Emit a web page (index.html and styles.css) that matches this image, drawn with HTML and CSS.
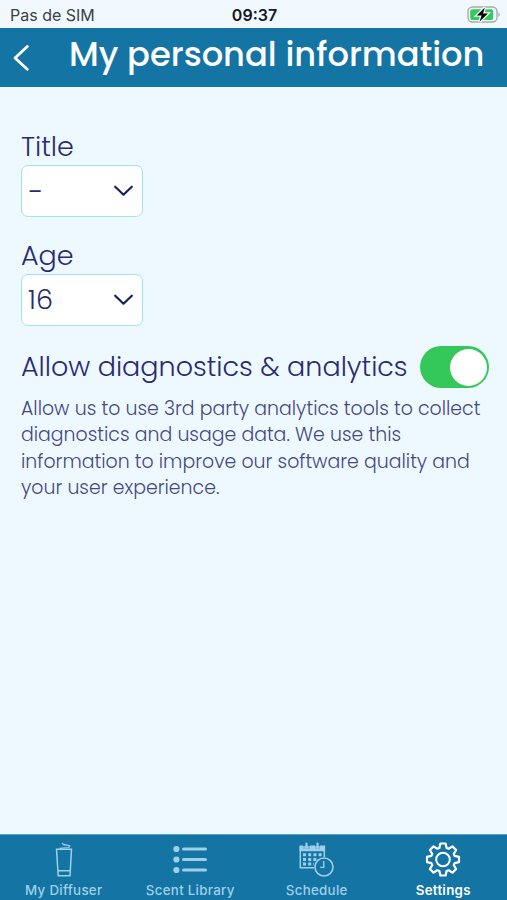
FILE: index.html
```html
<!DOCTYPE html>
<html lang="en">
<head>
<meta charset="utf-8">
<title>My personal information</title>
<link rel="stylesheet" href="styles.css">
</head>
<body>
<div class="status">
  <span class="carrier">Pas de SIM</span>
  <span class="time">09:37</span>
  <svg class="battery" width="33" height="18" viewBox="0 0 33 18">
    <rect x="1" y="1" width="29" height="15" rx="4.500" fill="#f4faff" stroke="#a5abb0" stroke-width="1.400"/>
    <rect x="3.200" y="3.200" width="23" height="10.800" rx="2" fill="#35ca5b"/>
    <path d="M31.400 6.200c1.800.9 1.800 3.800 0 4.700z" fill="#a5abb0"/>
    <path d="M17.800 1.500 9.800 9.400h4.800L12.500 15.700l8.400-8.200h-4.900z" fill="#000" stroke="#f4faff" stroke-width="2.600" paint-order="stroke"/>
  </svg>
</div>
<header class="header">
  <svg class="back" width="20" height="30" viewBox="0 0 20 30"><path d="M16.300 4.500 4 16 16.300 27.200" fill="none" stroke="#fff" stroke-width="2.800" stroke-linecap="round" stroke-linejoin="round"/></svg>
  <h1>My personal information</h1>
</header>
<main class="content">
  <section class="field">
    <span class="label">Title</span>
    <div class="select"><span class="dash">–</span><svg width="20" height="12" viewBox="0 0 20 12"><path d="M1.200 1.700 9.500 9.700l8.300-8" /></svg></div>
  </section>
  <section class="field">
    <span class="label">Age</span>
    <div class="select"><span>16</span><svg width="20" height="12" viewBox="0 0 20 12"><path d="M1.200 1.700 9.500 9.700l8.300-8" /></svg></div>
  </section>
  <div class="consent">
    <span class="label">Allow diagnostics &amp; analytics</span>
    <span class="toggle"><span class="knob"></span></span>
  </div>
  <p class="note">
    <span class="line">Allow us to use 3rd party analytics tools to collect</span>
    <span class="line">diagnostics and usage data. We use this</span>
    <span class="line">information to improve our software quality and</span>
    <span class="line">your user experience.</span>
  </p>
</main>
<nav class="tabs">
  <a class="tab">
    <svg width="36" height="36" viewBox="0 0 36 36" fill="none" stroke="currentColor" stroke-width="1.500">
      <path d="M10.500 7.200h15L24 33.700H12.200zM11.700 28.700h12.600"/>
      <path d="M13.500 6.300l9.300-.8 1-1.700-7-1.600M16 1.200l2.500 2" stroke-width="1.200"/>
    </svg>
    <span>My Diffuser</span>
  </a>
  <a class="tab">
    <svg width="36" height="36" viewBox="0 0 36 36" fill="currentColor">
      <circle cx="4.400" cy="7" r="3.100"/><circle cx="4.400" cy="17.500" r="3.100"/><circle cx="4.400" cy="28" r="3.100"/>
      <path d="M11.500 7h22M11.500 17.500h22M11.500 28h22" stroke="currentColor" stroke-width="3" stroke-linecap="round"/>
    </svg>
    <span>Scent Library</span>
  </a>
  <a class="tab">
    <svg width="36" height="36" viewBox="1 0 36 36" fill="none" stroke="currentColor">
      <path d="M16 25.700H2.300V5h24v10" stroke-width="1.500"/>
      <path d="M1.600 3.500h3.400v2.700h7V3.500h5v2.700h5V3.500h5.100v5.700H1.600z" fill="currentColor" stroke="none"/>
      <path d="M8.500 1.700v4M19.500 1.700v4" stroke-width="2.200" stroke-linecap="round"/>
      <path d="M5 12.700h19.500M5 17.400h14M5 22.100h11" stroke-width="3" stroke-dasharray="3 2.200"/>
      <circle cx="26" cy="25" r="9" stroke-width="1.600"/>
      <path d="M25.800 19v6.300h-3.500" stroke-width="1.300"/>
    </svg>
    <span>Schedule</span>
  </a>
  <a class="tab active">
    <svg width="36" height="36" viewBox="-18 -17.500 36 36" fill="none" stroke="currentColor" stroke-width="2.200" stroke-linejoin="round">
      <path d="M-3.600-11.600-2.600-16H2.600L3.600-11.600 5.660-10.750 9.480-13.150 13.150-9.480 10.750-5.660 11.600-3.600 16-2.600V2.600L11.600 3.600 10.750 5.660 13.150 9.480 9.480 13.150 5.660 10.750 3.600 11.600 2.600 16H-2.600L-3.600 11.600-5.660 10.750-9.480 13.150-13.150 9.480-10.750 5.660-11.600 3.600-16 2.600V-2.600L-11.600-3.600-10.750-5.660-13.150-9.480-9.480-13.150-5.660-10.750Z"/>
      <circle r="6.800" stroke-width="2"/>
    </svg>
    <span>Settings</span>
  </a>
</nav>
</body>
</html>
```
FILE: styles.css
```css
* { box-sizing: border-box; }
body {
  margin: 0;
  height: 900px;
  display: flex;
  flex-direction: column;
  overflow: hidden;
  background: #eef8ff;
  color: #292b70;
  font-family: Poppins, Inter, sans-serif;
  font-weight: 300;
}
span, h1 { white-space: nowrap; }
.status {
  height: 28px;
  display: grid;
  grid-template-columns: 1fr auto 1fr;
  align-items: center;
  padding: 2px 8px 0 10px;
  background: #f2f9fe;
  font: 400 16px/20px Inter, sans-serif;
  color: #3c4146;
}
.time { font-weight: 600; color: #15181b; }
.battery { justify-self: end; margin-right: -1px; }
.header {
  height: 59px;
  display: flex;
  padding-left: 11px;
  background: #1474a4;
  color: #fff;
}
.back { margin-top: 14px; }
h1 {
  margin: 7px 0 0 38px;
  font-size: 33.700px;
  line-height: 40px;
  font-weight: 500;
}
.content { flex: 1; padding: 43px 18px 0 21px; }
.field { height: 109px; }
.field + .field { height: 110px; }
.label { display: block; font-size: 27px; line-height: 34px; }
.field .label { height: 35px; }
.select {
  width: 122px;
  height: 52px;
  display: flex;
  align-items: center;
  justify-content: space-between;
  padding: 0 8px 0 6px;
  border: 1.500px solid #9ce5ea;
  border-radius: 7px;
  background: #fff;
  font-size: 27px;
}
.select path {
  fill: none;
  stroke: #18205f;
  stroke-width: 2.200;
  stroke-linecap: round;
  stroke-linejoin: round;
}
.dash { font-size: 21px; font-weight: 400; }
.consent { display: flex; justify-content: space-between; align-items: center; height: 42px; margin-top: -3px; }
.toggle {
  width: 69px;
  height: 42px;
  padding: 2.500px;
  display: flex;
  justify-content: flex-end;
  border-radius: 21px;
  background: #34c759;
}
.knob { width: 37px; height: 37px; border-radius: 50%; background: #fff; }
.note { margin: 8px 0 0; font-size: 18.900px; line-height: 26.400px; color: #45487f; }
.line { display: block; }
.tabs {
  height: 66px;
  display: grid;
  grid-template-columns: repeat(4, 126.500px);
  background: #1474a4;
  border-top: 1px solid #5b9fc2;
  color: #9fd0ea;
}
.tab {
  display: flex;
  flex-direction: column;
  align-items: center;
  padding: 7px 0 0 1px;
  font: 500 13.300px/16px Inter, sans-serif;
}
.tab span { margin-top: 4px; letter-spacing: .3px; }
.active { color: #fff; }
.active span { font-weight: 600; }
```
